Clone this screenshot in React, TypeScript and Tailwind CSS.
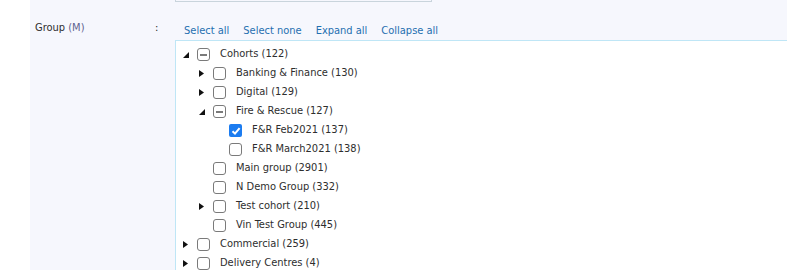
import React from "react";

type Node = { label: string; level: number; arrow?: "open" | "closed"; state?: "none" | "partial" | "checked" };

const rows: Node[] = [
  { label: "Cohorts (122)", level: 0, arrow: "open", state: "partial" },
  { label: "Banking & Finance (130)", level: 1, arrow: "closed" },
  { label: "Digital (129)", level: 1, arrow: "closed" },
  { label: "Fire & Rescue (127)", level: 1, arrow: "open", state: "partial" },
  { label: "F&R Feb2021 (137)", level: 2, state: "checked" },
  { label: "F&R March2021 (138)", level: 2 },
  { label: "Main group (2901)", level: 1 },
  { label: "N Demo Group (332)", level: 1 },
  { label: "Test cohort (210)", level: 1, arrow: "closed" },
  { label: "Vin Test Group (445)", level: 1 },
  { label: "Commercial (259)", level: 0, arrow: "closed" },
  { label: "Delivery Centres (4)", level: 0, arrow: "closed" },
];

const indent = ["pl-0", "pl-[16px]", "pl-[32px]"];

function Arrow({ kind }: { kind?: "open" | "closed" }) {
  return (
    <div className="w-[15px] h-[19px] flex items-center">
      {kind === "closed" && (
        <svg width="5" height="7" viewBox="0 0 5 7" className="ml-[1px]">
          <path d="M0 0 L5 3.5 L0 7 Z" fill="#111" />
        </svg>
      )}
      {kind === "open" && (
        <svg width="6" height="6" viewBox="0 0 6 6" className="ml-[1px]">
          <path d="M6 0 L6 6 L0 6 Z" fill="#111" />
        </svg>
      )}
    </div>
  );
}

function Check({ state }: { state?: "none" | "partial" | "checked" }) {
  if (state === "checked") {
    return (
      <div className="w-[13px] h-[13px] rounded-[2px] bg-[#1c7cf0] flex items-center justify-center">
        <svg width="10" height="10" viewBox="0 0 10 10">
          <path d="M1.5 5.2 L4 7.6 L8.6 2.2" fill="none" stroke="#fff" strokeWidth="2" />
        </svg>
      </div>
    );
  }
  return (
    <div className="w-[13px] h-[13px] rounded-[3px] border border-[#7a7a7a] bg-white flex items-center justify-center">
      {state === "partial" && <div className="w-[7px] h-[2px] bg-[#7a7a7a]" />}
    </div>
  );
}

export default function App() {
  return (
    <div
      className="w-[787px] h-[270px] bg-white flex overflow-hidden text-[#2e2e2e]"
      style={{ fontFamily: '"DejaVu Sans Condensed", "DejaVu Sans", sans-serif' }}
    >
      <div className="w-[30px] shrink-0" />
      <div className="flex-1 bg-[#f6f7fd] flex flex-col">
        <div className="pl-[145px]">
          <div className="w-[257px] h-[2px] border-x border-b border-[#c9d4dc]" />
        </div>
        <div className="flex">
          <div className="w-[145px] shrink-0 flex pt-[18px] pl-[5px] text-[11px]">
            <span className="w-[120px]">
              Group <span className="text-[#5f6390]">(M)</span>
            </span>
            <span>:</span>
          </div>
          <div className="flex-1 flex flex-col">
            <div className="flex gap-[14px] pl-[9px] pt-[21px] h-[38px] text-[11px] text-[#1f6fb0]">
              <span>Select all</span>
              <span>Select none</span>
              <span>Expand all</span>
              <span>Collapse all</span>
            </div>
            <div className="border-l border-t border-[#bfe6f6] bg-white pt-[4px] pl-[6px] h-[240px] text-[11px]">
              {rows.map((r, i) => (
                <div key={i} className={`h-[19px] flex items-center ${indent[r.level]}`}>
                  <Arrow kind={r.arrow} />
                  <Check state={r.state} />
                  <span className="ml-[10px] whitespace-nowrap">{r.label}</span>
                </div>
              ))}
            </div>
          </div>
        </div>
      </div>
    </div>
  );
}
